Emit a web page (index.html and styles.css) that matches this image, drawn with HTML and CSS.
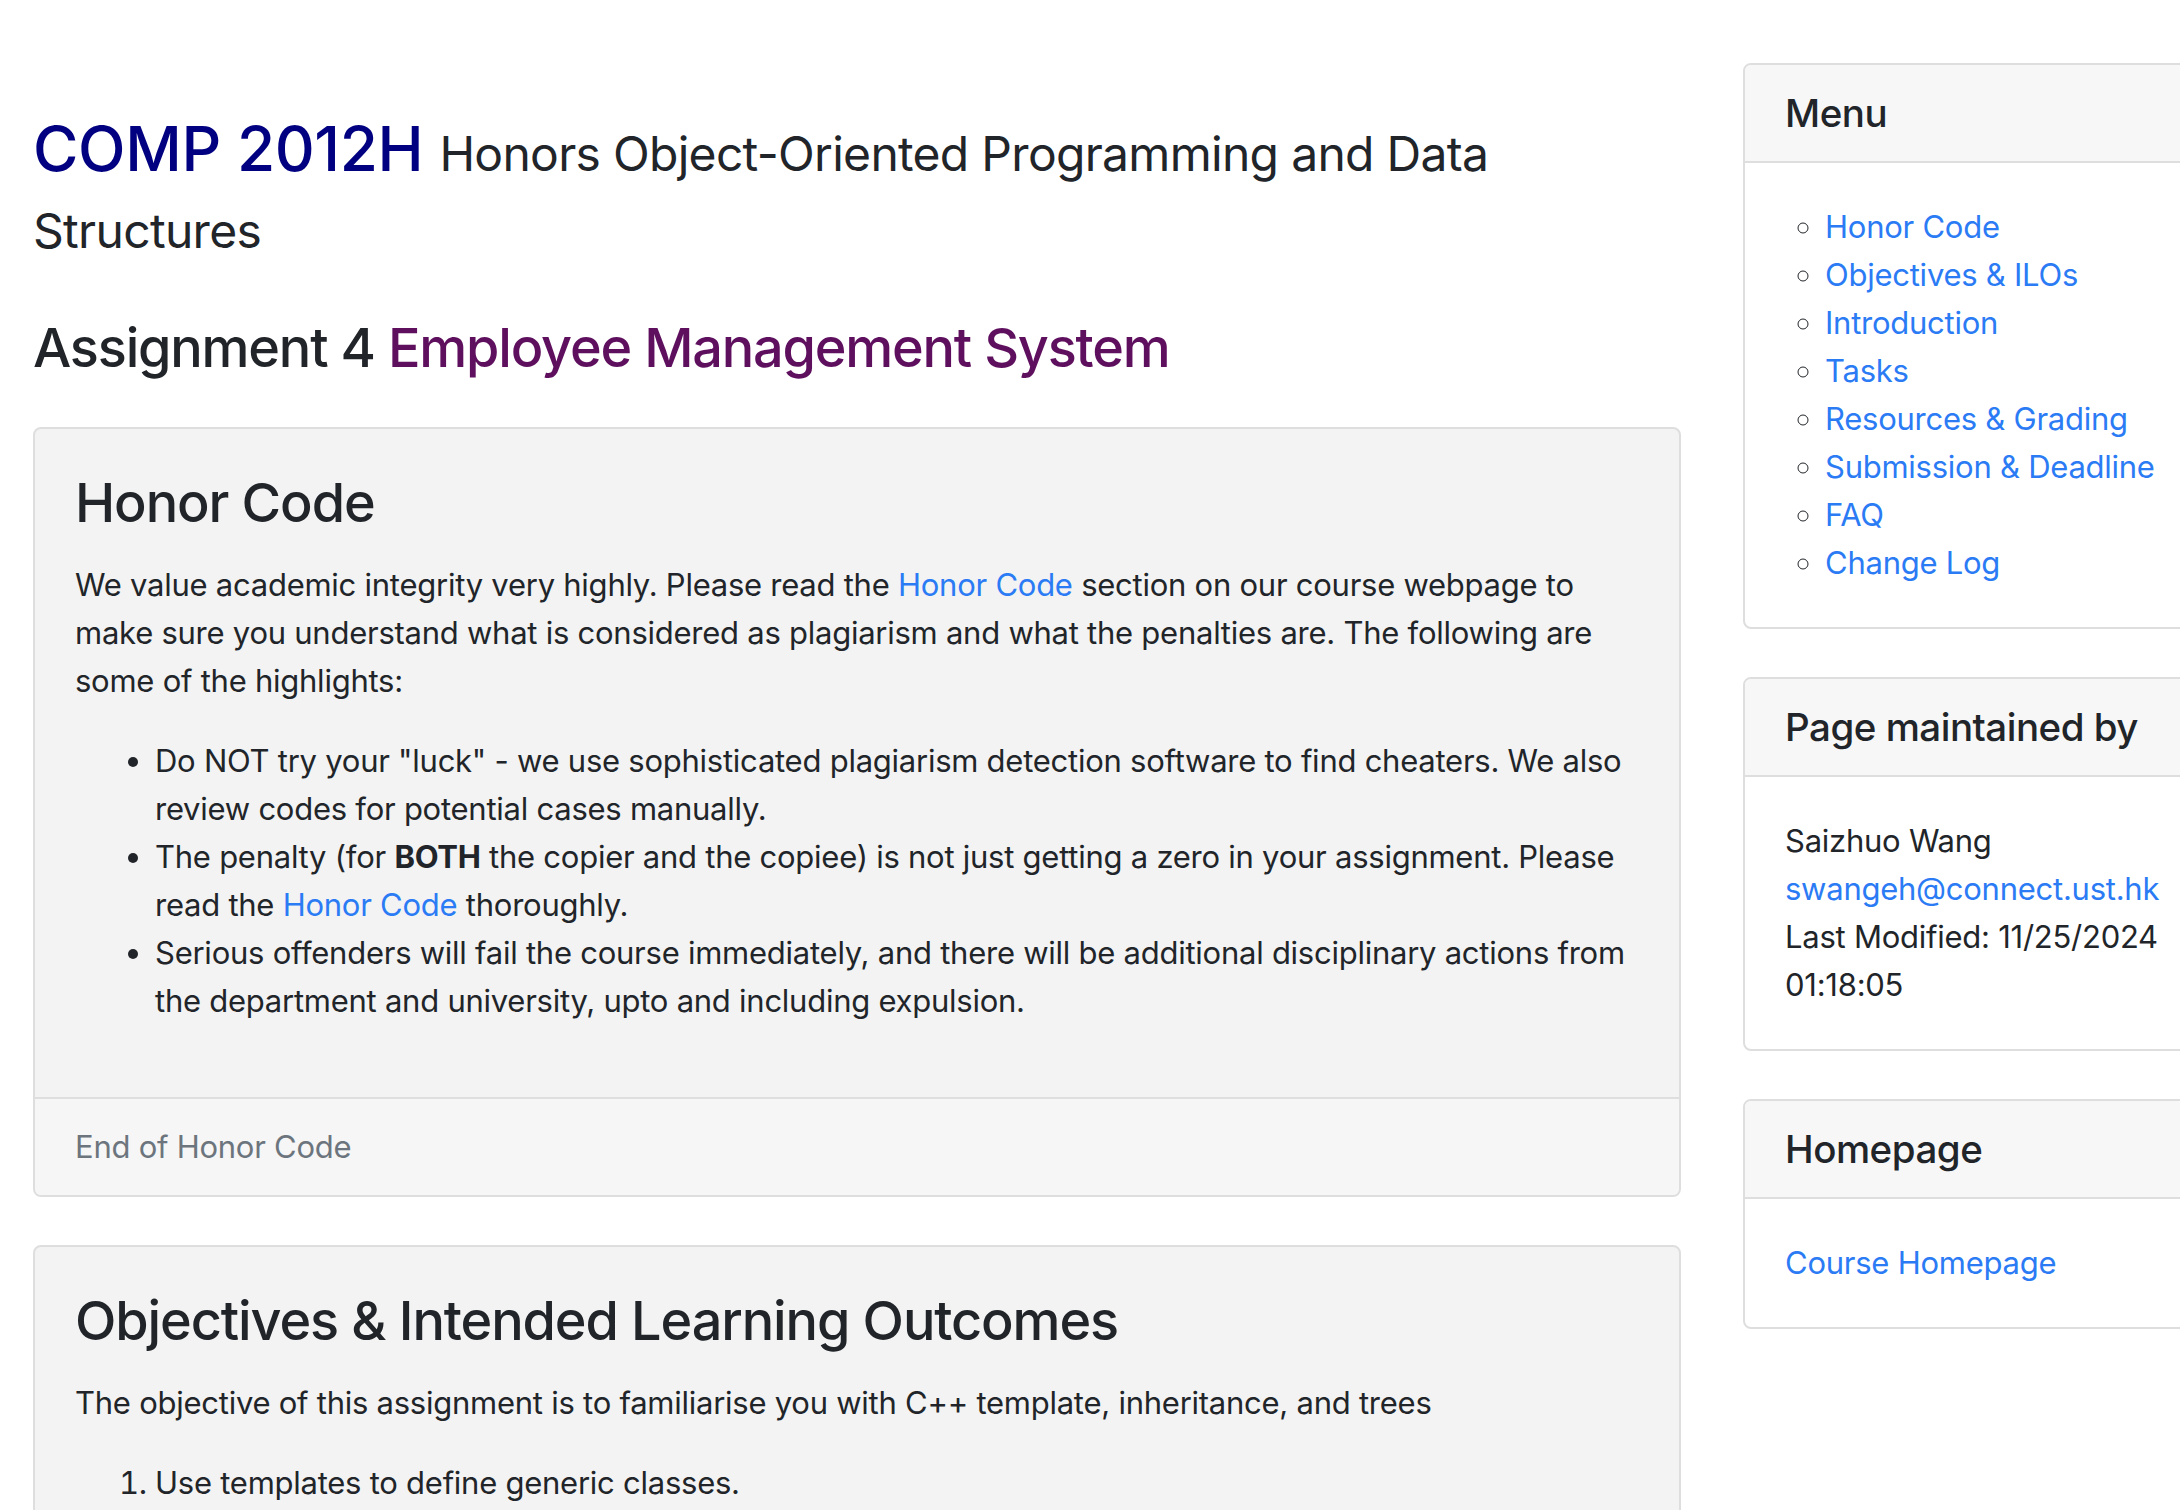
FILE: index.html
```html
<!DOCTYPE html>
<html lang="en">
<head>
<meta charset="utf-8">
<title>COMP 2012H Assignment 4</title>
<link rel="stylesheet" href="styles.css">
</head>
<body>
<div class="page">
  <main class="main">
    <h2 class="title"><span class="code">COMP 2012H</span> <small class="subtitle">Honors Object-Oriented Programming and Data Structures</small></h2>
    <h3 class="assign">Assignment 4 <span class="assign-name">Employee Management System</span></h3>

    <section class="card card-main">
      <div class="card-body">
        <h3 class="card-heading">Honor Code</h3>
        <p>We value academic integrity very highly. Please read the <a href="#">Honor Code</a> section on our course webpage to make sure you understand what is considered as plagiarism and what the penalties are. The following are some of the highlights:</p>
        <ul class="bullets">
          <li>Do NOT try your "luck" - we use sophisticated plagiarism detection software to find cheaters. We also review codes for potential cases manually.</li>
          <li>The penalty (for <b>BOTH</b> the copier and the copiee) is not just getting a zero in your assignment. Please read the <a href="#">Honor Code</a> thoroughly.</li>
          <li>Serious offenders will fail the course immediately, and there will be additional disciplinary actions from the department and university, upto and including expulsion.</li>
        </ul>
      </div>
      <div class="card-footer">End of Honor Code</div>
    </section>

    <section class="card card-main">
      <div class="card-body">
        <h3 class="card-heading">Objectives &amp; Intended Learning Outcomes</h3>
        <p>The objective of this assignment is to familiarise you with C++ template, inheritance, and trees</p>
        <ol class="numbers">
          <li>Use templates to define generic classes.</li>
        </ol>
      </div>
    </section>
  </main>

  <aside class="side">
    <section class="card card-side">
      <div class="card-header"><h5>Menu</h5></div>
      <div class="card-body">
        <ul class="menu">
          <li><a href="#">Honor Code</a></li>
          <li><a href="#">Objectives &amp; ILOs</a></li>
          <li><a href="#">Introduction</a></li>
          <li><a href="#">Tasks</a></li>
          <li><a href="#">Resources &amp; Grading</a></li>
          <li><a href="#">Submission &amp; Deadline</a></li>
          <li><a href="#">FAQ</a></li>
          <li><a href="#">Change Log</a></li>
        </ul>
      </div>
    </section>

    <section class="card card-side">
      <div class="card-header"><h5>Page maintained by</h5></div>
      <div class="card-body">
        <div>Saizhuo Wang</div>
        <div><a href="#">swangeh@connect.ust.hk</a></div>
        <div>Last Modified: 11/25/2024 01:18:05</div>
      </div>
    </section>

    <section class="card card-side">
      <div class="card-header"><h5>Homepage</h5></div>
      <div class="card-body">
        <a href="#">Course Homepage</a>
      </div>
    </section>
  </aside>
</div>
</body>
</html>
```

FILE: styles.css
```css
html {
  overflow: hidden;
}

body {
  margin: 0;
  font-family: Inter, "Noto Sans", "Liberation Sans", sans-serif;
  font-size: 31px;
  line-height: 48px;
  letter-spacing: -0.25px;
  color: #212529;
  background: #ffffff;
}

a {
  color: #2b7bf5;
  text-decoration: none;
}

.page {
  display: flex;
  align-items: flex-start;
  gap: 62px;
  padding: 63px 0 0 33px;
  width: 2400px;
}

.main {
  width: 1648px;
  flex: none;
}

.title {
  margin: 48px 0 16px;
  font-size: 62px;
  line-height: 76.8px;
  font-weight: 500;
  letter-spacing: -0.4px;
}

.code {
  color: #000080;
}

.subtitle {
  font-size: 48px;
  line-height: 1.2;
  font-weight: 400;
  letter-spacing: -0.7px;
}

.assign {
  margin: 49px 0 46px;
  font-size: 54px;
  line-height: 67.2px;
  font-weight: 500;
  letter-spacing: -1.2px;
}

.assign-name {
  color: #5e0f5e;
}

.card {
  border: 2px solid #dedede;
  border-radius: 8px;
  overflow: hidden;
}

.card-main {
  background: #f3f3f3;
  margin-bottom: 48px;
}

.card-body {
  padding: 40px;
}

.card-heading {
  margin: 0 0 25px;
  font-size: 54px;
  line-height: 67.2px;
  font-weight: 500;
  letter-spacing: -1.1px;
}

.card-body p {
  margin: 0 0 32px;
}

.bullets,
.numbers {
  margin: 0 0 32px;
  padding-left: 80px;
}

.card-footer {
  padding: 24px 40px;
  border-top: 2px solid #dedede;
  background: #f6f6f6;
  color: #6c757d;
}

.side {
  width: 510px;
  flex: none;
}

.card-side {
  background: #ffffff;
  margin-bottom: 48px;
}

.card-header {
  padding: 24px 40px;
  background: #f7f7f7;
  border-bottom: 2px solid #dedede;
}

.card-header h5 {
  margin: 0;
  font-size: 38.5px;
  line-height: 48px;
  font-weight: 500;
  letter-spacing: -0.5px;
}

.menu {
  margin: 0;
  padding-left: 40px;
  list-style: circle;
}
```
